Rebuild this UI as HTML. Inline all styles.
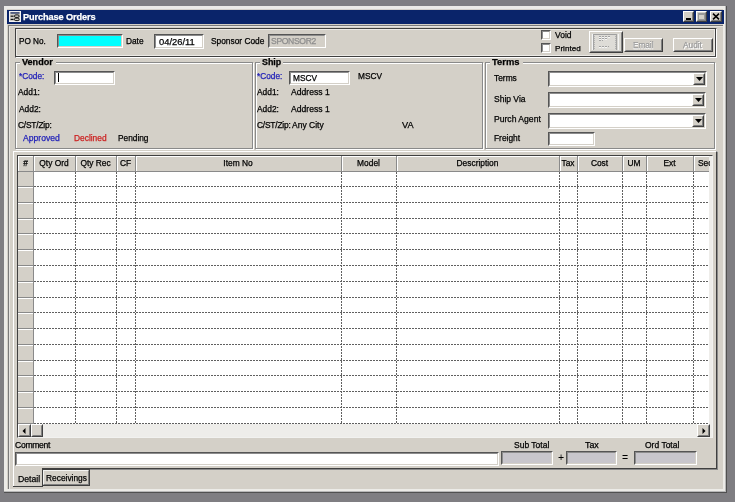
<!DOCTYPE html>
<html><head><meta charset="utf-8"><title>Purchase Orders</title>
<style>
html,body{margin:0;padding:0;width:735px;height:502px;overflow:hidden;background:#7F7E82;}
.a{position:absolute;}
.t{position:absolute;white-space:nowrap;font-family:"Liberation Sans",sans-serif;color:#000;-webkit-text-stroke:0.25px currentColor;will-change:transform;}
.c{text-align:center;}
</style></head><body>
<div id="w" style="position:absolute;left:0;top:0;width:735px;height:502px;overflow:hidden;">
<div class="a" style="left:0px;top:0px;width:735px;height:502px;background:#7F7E82;"></div>
<div class="a" style="left:4px;top:6px;width:723px;height:487px;background:#ECEBE7;"></div>
<div class="a" style="left:726px;top:6px;width:1px;height:487px;background:#505050;"></div>
<div class="a" style="left:4px;top:492px;width:723px;height:1px;background:#505050;"></div>
<div class="a" style="left:725px;top:6px;width:1px;height:486px;background:#B8B8B8;"></div>
<div class="a" style="left:4px;top:491px;width:722px;height:1px;background:#B8B8B8;"></div>
<div class="a" style="left:7px;top:9px;width:716px;height:480px;background:#D4D0C8;"></div>
<div class="a" style="left:7px;top:10px;width:717px;height:14px;background:#0A246A;"></div>
<div class="a" style="left:8px;top:25px;width:1px;height:464px;background:#7A7A7A;"></div>
<div class="a" style="left:8px;top:25px;width:715px;height:1px;background:#7A7A7A;"></div>
<div class="a" style="left:9px;top:26px;width:1px;height:463px;background:#E6E4E0;"></div>
<div class="a" style="left:9px;top:26px;width:714px;height:1px;background:#E6E4E0;"></div>
<svg class="a" style="left:9px;top:11px" width="12" height="11" viewBox="0 0 12 11">
<rect x="0.5" y="0.5" width="11" height="10" fill="#D0CEC8" stroke="#F2F2F2" stroke-width="1"/>
<rect x="1.5" y="1.3" width="9" height="1.3" fill="#1A2A60"/>
<rect x="1.6" y="4.6" width="3" height="1.2" fill="#111"/>
<rect x="1.6" y="7.8" width="3" height="1.2" fill="#111"/>
<rect x="5.5" y="3.9" width="4.6" height="2.5" rx="1.2" fill="none" stroke="#111" stroke-width="1"/>
<rect x="5.5" y="7.1" width="4.6" height="2.5" rx="1.2" fill="none" stroke="#111" stroke-width="1"/>
</svg>
<div class="t" style="left:22.5px;top:13px;font-size:9.2px;line-height:9.2px;color:#fff;font-weight:bold;letter-spacing:-0.1px;">Purchase Orders</div>
<div class="a" style="left:683px;top:11px;width:11px;height:11px;background:#D4D0C8;"></div>
<div class="a" style="left:683px;top:11px;width:11px;height:11px;box-sizing:border-box;border-style:solid;border-width:1px;border-color:#FFFFFF #404040 #404040 #FFFFFF;"></div>
<div class="a" style="left:684px;top:12px;width:9px;height:9px;box-sizing:border-box;border-style:solid;border-width:1px;border-color:#D4D0C8 #808080 #808080 #D4D0C8;"></div>
<div class="a" style="left:696px;top:11px;width:11px;height:11px;background:#D4D0C8;"></div>
<div class="a" style="left:696px;top:11px;width:11px;height:11px;box-sizing:border-box;border-style:solid;border-width:1px;border-color:#FFFFFF #404040 #404040 #FFFFFF;"></div>
<div class="a" style="left:697px;top:12px;width:9px;height:9px;box-sizing:border-box;border-style:solid;border-width:1px;border-color:#D4D0C8 #808080 #808080 #D4D0C8;"></div>
<div class="a" style="left:710px;top:11px;width:12px;height:11px;background:#D4D0C8;"></div>
<div class="a" style="left:710px;top:11px;width:12px;height:11px;box-sizing:border-box;border-style:solid;border-width:1px;border-color:#FFFFFF #404040 #404040 #FFFFFF;"></div>
<div class="a" style="left:711px;top:12px;width:10px;height:9px;box-sizing:border-box;border-style:solid;border-width:1px;border-color:#D4D0C8 #808080 #808080 #D4D0C8;"></div>
<div class="a" style="left:686px;top:18px;width:5px;height:2px;background:#000;"></div>
<div class="a" style="left:698px;top:13px;width:7px;height:7px;box-sizing:border-box;border:1px solid #9a9a9a;border-top-width:2px;"></div>
<svg class="a" style="left:712px;top:13px" width="8" height="7" viewBox="0 0 8 7">
<path d="M1 0.6 L7 6.4 M7 0.6 L1 6.4" stroke="#000" stroke-width="1.5"/></svg>
<div class="a" style="left:15px;top:28px;width:702px;height:30px;box-sizing:border-box;border-style:solid;border-width:1px;border-color:#404040 #FFFFFF #FFFFFF #404040;"></div>
<div class="a" style="left:15px;top:28px;width:701px;height:29px;box-sizing:border-box;border-style:solid;border-width:1px;border-color:#404040 #404040 #404040 #404040;"></div>
<div class="a" style="left:16px;top:29px;width:699px;height:27px;box-sizing:border-box;border-style:solid;border-width:1px;border-color:#ECEAE6 #ECEAE6 #ECEAE6 #ECEAE6;"></div>
<div class="t" style="left:19.3px;top:38px;font-size:8.2px;line-height:8.2px;">PO No.</div>
<div class="a" style="left:57px;top:34px;width:66px;height:14px;background:#00FFFF;"></div>
<div class="a" style="left:57px;top:34px;width:66px;height:14px;box-sizing:border-box;border-style:solid;border-width:1px;border-color:#555555 #FFFFFF #FFFFFF #555555;"></div>
<div class="a" style="left:58px;top:35px;width:64px;height:12px;box-sizing:border-box;border-style:solid;border-width:1px;border-color:#8C8C8C #D4D0C8 #D4D0C8 #8C8C8C;"></div>
<div class="t" style="left:126px;top:37px;font-size:8.3px;line-height:8.3px;">Date</div>
<div class="a" style="left:154px;top:34px;width:50px;height:15px;background:#fff;"></div>
<div class="a" style="left:154px;top:34px;width:50px;height:15px;box-sizing:border-box;border-style:solid;border-width:1px;border-color:#555555 #FFFFFF #FFFFFF #555555;"></div>
<div class="a" style="left:155px;top:35px;width:48px;height:13px;box-sizing:border-box;border-style:solid;border-width:1px;border-color:#8C8C8C #D4D0C8 #D4D0C8 #8C8C8C;"></div>
<div class="t" style="left:158.8px;top:37px;font-size:9.4px;line-height:9.4px;">04/26/11</div>
<div class="t" style="left:210.5px;top:37px;font-size:8.35px;line-height:8.35px;">Sponsor Code</div>
<div class="a" style="left:268px;top:34px;width:58px;height:14px;background:#D4D0C8;"></div>
<div class="a" style="left:268px;top:34px;width:58px;height:14px;box-sizing:border-box;border-style:solid;border-width:1px;border-color:#555555 #FFFFFF #FFFFFF #555555;"></div>
<div class="a" style="left:269px;top:35px;width:56px;height:12px;box-sizing:border-box;border-style:solid;border-width:1px;border-color:#8C8C8C #D4D0C8 #D4D0C8 #8C8C8C;"></div>
<div class="t" style="left:271.4px;top:37px;font-size:8.6px;line-height:8.6px;color:#8c8c8c;letter-spacing:-0.35px;">SPONSOR2</div>
<div class="a" style="left:541px;top:30px;width:10px;height:10px;background:#fff;"></div>
<div class="a" style="left:541px;top:30px;width:10px;height:10px;box-sizing:border-box;border-style:solid;border-width:1px;border-color:#555555 #FFFFFF #FFFFFF #555555;"></div>
<div class="a" style="left:542px;top:31px;width:8px;height:8px;box-sizing:border-box;border-style:solid;border-width:1px;border-color:#8C8C8C #D4D0C8 #D4D0C8 #8C8C8C;"></div>
<div class="t" style="left:554.7px;top:31px;font-size:8.5px;line-height:8.5px;">Void</div>
<div class="a" style="left:541px;top:43px;width:10px;height:10px;background:#fff;"></div>
<div class="a" style="left:541px;top:43px;width:10px;height:10px;box-sizing:border-box;border-style:solid;border-width:1px;border-color:#555555 #FFFFFF #FFFFFF #555555;"></div>
<div class="a" style="left:542px;top:44px;width:8px;height:8px;box-sizing:border-box;border-style:solid;border-width:1px;border-color:#8C8C8C #D4D0C8 #D4D0C8 #8C8C8C;"></div>
<div class="t" style="left:554.7px;top:45px;font-size:8.1px;line-height:8.1px;">Printed</div>
<div class="a" style="left:589px;top:31px;width:34px;height:22px;background:#D4D0C8;"></div>
<div class="a" style="left:589px;top:31px;width:34px;height:22px;box-sizing:border-box;border-style:solid;border-width:1px;border-color:#FFFFFF #404040 #404040 #FFFFFF;"></div>
<div class="a" style="left:590px;top:32px;width:32px;height:20px;box-sizing:border-box;border-style:solid;border-width:1px;border-color:#D4D0C8 #808080 #808080 #D4D0C8;"></div>
<svg class="a" style="left:591px;top:33px" width="30" height="18" viewBox="0 0 30 18" shape-rendering="crispEdges">
<rect x="0" y="0" width="30" height="18" fill="#DAD8D2"/>
<path d="M2.5 1 V17" stroke="#A4A4A4" stroke-width="1"/>
<path d="M25.5 1 V17" stroke="#A4A4A4" stroke-width="1"/>
<path d="M1.5 1 V17 M27.5 1 V17" stroke="#F4F4F4" stroke-width="1"/>
<path d="M3 1.5 H25" stroke="#A0A0A0" stroke-width="1"/>
<path d="M3.5 3 V16 M24.5 3 V16" stroke="#B4B4B4" stroke-width="1" stroke-dasharray="1 1"/>
<rect x="4" y="2" width="20" height="14" fill="#DEDCD7"/>
<path d="M8 3.5 H20 M8 5.5 H17 M8 7.5 H12 M8 13.5 H18" stroke="#A2A2A2" stroke-width="1" stroke-dasharray="2 1"/>
<path d="M8 4.5 H19 M8 6.5 H16 M8 14.5 H17" stroke="#F6F6F6" stroke-width="1" stroke-dasharray="2 1"/>
</svg>
<div class="a" style="left:624px;top:38px;width:39px;height:14px;background:#D4D0C8;"></div>
<div class="a" style="left:624px;top:38px;width:39px;height:14px;box-sizing:border-box;border-style:solid;border-width:1px;border-color:#FFFFFF #404040 #404040 #FFFFFF;"></div>
<div class="a" style="left:625px;top:39px;width:37px;height:12px;box-sizing:border-box;border-style:solid;border-width:1px;border-color:#D4D0C8 #808080 #808080 #D4D0C8;"></div>
<div class="t" style="left:633.4px;top:43px;font-size:8.2px;line-height:8.2px;color:#ffffff;">Email</div>
<div class="t" style="left:632.6px;top:42px;font-size:8.2px;line-height:8.2px;color:#9c9c9c;">Email</div>
<div class="a" style="left:673px;top:38px;width:40px;height:14px;background:#D4D0C8;"></div>
<div class="a" style="left:673px;top:38px;width:40px;height:14px;box-sizing:border-box;border-style:solid;border-width:1px;border-color:#FFFFFF #404040 #404040 #FFFFFF;"></div>
<div class="a" style="left:674px;top:39px;width:38px;height:12px;box-sizing:border-box;border-style:solid;border-width:1px;border-color:#D4D0C8 #808080 #808080 #D4D0C8;"></div>
<div class="t" style="left:683.6px;top:42px;font-size:8.3px;line-height:8.3px;color:#ffffff;">Audit</div>
<div class="t" style="left:682.8px;top:41px;font-size:8.3px;line-height:8.3px;color:#9c9c9c;">Audit</div>
<div class="a" style="left:16px;top:63px;width:238px;height:87px;box-sizing:border-box;border-style:solid;border-width:1px;border-color:#FFFFFF #FFFFFF #FFFFFF #FFFFFF;"></div>
<div class="a" style="left:15px;top:62px;width:238px;height:87px;box-sizing:border-box;border-style:solid;border-width:1px;border-color:#8a8a8a #8a8a8a #8a8a8a #8a8a8a;"></div>
<div class="a" style="left:20.2px;top:58px;width:36.1px;height:9px;background:#D4D0C8;"></div>
<div class="t" style="left:22.2px;top:58px;font-size:9.1px;line-height:9.1px;font-weight:bold;">Vendor</div>
<div class="a" style="left:256px;top:63px;width:228px;height:87px;box-sizing:border-box;border-style:solid;border-width:1px;border-color:#FFFFFF #FFFFFF #FFFFFF #FFFFFF;"></div>
<div class="a" style="left:255px;top:62px;width:228px;height:87px;box-sizing:border-box;border-style:solid;border-width:1px;border-color:#8a8a8a #8a8a8a #8a8a8a #8a8a8a;"></div>
<div class="a" style="left:259.5px;top:58px;width:23.5px;height:9px;background:#D4D0C8;"></div>
<div class="t" style="left:261.5px;top:58px;font-size:8.9px;line-height:8.9px;font-weight:bold;">Ship</div>
<div class="a" style="left:486px;top:63px;width:230px;height:87px;box-sizing:border-box;border-style:solid;border-width:1px;border-color:#FFFFFF #FFFFFF #FFFFFF #FFFFFF;"></div>
<div class="a" style="left:485px;top:62px;width:230px;height:87px;box-sizing:border-box;border-style:solid;border-width:1px;border-color:#8a8a8a #8a8a8a #8a8a8a #8a8a8a;"></div>
<div class="a" style="left:490.3px;top:58px;width:33.2px;height:9px;background:#D4D0C8;"></div>
<div class="t" style="left:492.3px;top:57px;font-size:9.4px;line-height:9.4px;font-weight:bold;">Terms</div>
<div class="t" style="left:18.5px;top:72px;font-size:8.3px;line-height:8.3px;color:#1F1FB8;">*Code:</div>
<div class="a" style="left:54px;top:71px;width:61px;height:14px;background:#fff;"></div>
<div class="a" style="left:54px;top:71px;width:61px;height:14px;box-sizing:border-box;border-style:solid;border-width:1px;border-color:#555555 #FFFFFF #FFFFFF #555555;"></div>
<div class="a" style="left:55px;top:72px;width:59px;height:12px;box-sizing:border-box;border-style:solid;border-width:1px;border-color:#8C8C8C #D4D0C8 #D4D0C8 #8C8C8C;"></div>
<div class="a" style="left:58px;top:73px;width:1px;height:9px;background:#000;"></div>
<div class="t" style="left:18.2px;top:88px;font-size:8.4px;line-height:8.4px;">Add1:</div>
<div class="t" style="left:18.8px;top:105px;font-size:8.4px;line-height:8.4px;">Add2:</div>
<div class="t" style="left:18.2px;top:121px;font-size:8.4px;line-height:8.4px;letter-spacing:-0.2px;">C/ST/Zip:</div>
<div class="t" style="left:22.7px;top:134px;font-size:8.6px;line-height:8.6px;color:#1F1FB8;">Approved</div>
<div class="t" style="left:73.7px;top:134px;font-size:8.4px;line-height:8.4px;color:#CC2020;">Declined</div>
<div class="t" style="left:117.6px;top:134px;font-size:8.3px;line-height:8.3px;">Pending</div>
<div class="t" style="left:256.7px;top:72px;font-size:8.3px;line-height:8.3px;color:#1F1FB8;">*Code:</div>
<div class="a" style="left:289px;top:71px;width:61px;height:14px;background:#fff;"></div>
<div class="a" style="left:289px;top:71px;width:61px;height:14px;box-sizing:border-box;border-style:solid;border-width:1px;border-color:#555555 #FFFFFF #FFFFFF #555555;"></div>
<div class="a" style="left:290px;top:72px;width:59px;height:12px;box-sizing:border-box;border-style:solid;border-width:1px;border-color:#8C8C8C #D4D0C8 #D4D0C8 #8C8C8C;"></div>
<div class="t" style="left:292.7px;top:74px;font-size:8.3px;line-height:8.3px;">MSCV</div>
<div class="t" style="left:358px;top:72px;font-size:8.3px;line-height:8.3px;">MSCV</div>
<div class="t" style="left:256.7px;top:88px;font-size:8.4px;line-height:8.4px;">Add1:</div>
<div class="t" style="left:291.4px;top:88px;font-size:8.6px;line-height:8.6px;">Address 1</div>
<div class="t" style="left:256.7px;top:105px;font-size:8.4px;line-height:8.4px;">Add2:</div>
<div class="t" style="left:291.4px;top:105px;font-size:8.6px;line-height:8.6px;">Address 1</div>
<div class="t" style="left:256.7px;top:121px;font-size:8.4px;line-height:8.4px;letter-spacing:-0.2px;">C/ST/Zip:</div>
<div class="t" style="left:292.0px;top:121px;font-size:8.5px;line-height:8.5px;">Any City</div>
<div class="t" style="left:402.0px;top:121px;font-size:9.2px;line-height:9.2px;">VA</div>
<div class="t" style="left:494.2px;top:74px;font-size:8.4px;line-height:8.4px;">Terms</div>
<div class="t" style="left:494.2px;top:95px;font-size:8.5px;line-height:8.5px;">Ship Via</div>
<div class="t" style="left:494.2px;top:115px;font-size:8.6px;line-height:8.6px;">Purch Agent</div>
<div class="t" style="left:494.2px;top:134px;font-size:8.4px;line-height:8.4px;">Freight</div>
<div class="a" style="left:548px;top:71px;width:159px;height:16px;background:#fff;"></div>
<div class="a" style="left:548px;top:71px;width:159px;height:16px;box-sizing:border-box;border-style:solid;border-width:1px;border-color:#555555 #FFFFFF #FFFFFF #555555;"></div>
<div class="a" style="left:549px;top:72px;width:157px;height:14px;box-sizing:border-box;border-style:solid;border-width:1px;border-color:#8C8C8C #D4D0C8 #D4D0C8 #8C8C8C;"></div>
<div class="a" style="left:693px;top:73px;width:12px;height:12px;background:#D4D0C8;"></div>
<div class="a" style="left:693px;top:73px;width:12px;height:12px;box-sizing:border-box;border-style:solid;border-width:1px;border-color:#FFFFFF #404040 #404040 #FFFFFF;"></div>
<div class="a" style="left:694px;top:74px;width:10px;height:10px;box-sizing:border-box;border-style:solid;border-width:1px;border-color:#D4D0C8 #808080 #808080 #D4D0C8;"></div>
<svg class="a" style="left:695.5px;top:77.0px" width="7" height="4" viewBox="0 0 7 4"><path d="M0 0 H7 L3.5 4 Z" fill="#000"/></svg>
<div class="a" style="left:548px;top:92px;width:158px;height:16px;background:#fff;"></div>
<div class="a" style="left:548px;top:92px;width:158px;height:16px;box-sizing:border-box;border-style:solid;border-width:1px;border-color:#555555 #FFFFFF #FFFFFF #555555;"></div>
<div class="a" style="left:549px;top:93px;width:156px;height:14px;box-sizing:border-box;border-style:solid;border-width:1px;border-color:#8C8C8C #D4D0C8 #D4D0C8 #8C8C8C;"></div>
<div class="a" style="left:692px;top:94px;width:12px;height:12px;background:#D4D0C8;"></div>
<div class="a" style="left:692px;top:94px;width:12px;height:12px;box-sizing:border-box;border-style:solid;border-width:1px;border-color:#FFFFFF #404040 #404040 #FFFFFF;"></div>
<div class="a" style="left:693px;top:95px;width:10px;height:10px;box-sizing:border-box;border-style:solid;border-width:1px;border-color:#D4D0C8 #808080 #808080 #D4D0C8;"></div>
<svg class="a" style="left:694.5px;top:98.0px" width="7" height="4" viewBox="0 0 7 4"><path d="M0 0 H7 L3.5 4 Z" fill="#000"/></svg>
<div class="a" style="left:548px;top:113px;width:158px;height:16px;background:#fff;"></div>
<div class="a" style="left:548px;top:113px;width:158px;height:16px;box-sizing:border-box;border-style:solid;border-width:1px;border-color:#555555 #FFFFFF #FFFFFF #555555;"></div>
<div class="a" style="left:549px;top:114px;width:156px;height:14px;box-sizing:border-box;border-style:solid;border-width:1px;border-color:#8C8C8C #D4D0C8 #D4D0C8 #8C8C8C;"></div>
<div class="a" style="left:692px;top:115px;width:12px;height:12px;background:#D4D0C8;"></div>
<div class="a" style="left:692px;top:115px;width:12px;height:12px;box-sizing:border-box;border-style:solid;border-width:1px;border-color:#FFFFFF #404040 #404040 #FFFFFF;"></div>
<div class="a" style="left:693px;top:116px;width:10px;height:10px;box-sizing:border-box;border-style:solid;border-width:1px;border-color:#D4D0C8 #808080 #808080 #D4D0C8;"></div>
<svg class="a" style="left:694.5px;top:119.0px" width="7" height="4" viewBox="0 0 7 4"><path d="M0 0 H7 L3.5 4 Z" fill="#000"/></svg>
<div class="a" style="left:548px;top:132px;width:47px;height:14px;background:#fff;"></div>
<div class="a" style="left:548px;top:132px;width:47px;height:14px;box-sizing:border-box;border-style:solid;border-width:1px;border-color:#555555 #FFFFFF #FFFFFF #555555;"></div>
<div class="a" style="left:549px;top:133px;width:45px;height:12px;box-sizing:border-box;border-style:solid;border-width:1px;border-color:#8C8C8C #D4D0C8 #D4D0C8 #8C8C8C;"></div>
<div class="a" style="left:13px;top:151px;width:705px;height:319px;box-sizing:border-box;border-style:solid;border-width:1px;border-color:#FFFFFF #8a8a8a #8a8a8a #FFFFFF;"></div>
<div class="a" style="left:13px;top:151px;width:704px;height:318px;box-sizing:border-box;border-style:solid;border-width:1px;border-color:#FFFFFF #404040 #404040 #FFFFFF;"></div>
<div class="a" style="left:17px;top:155px;width:696px;height:283px;background:#D4D0C8;"></div>
<div class="a" style="left:17px;top:155px;width:696px;height:283px;box-sizing:border-box;border-style:solid;border-width:1px;border-color:#404040 #F2F2F0 #F2F2F0 #404040;"></div>
<div class="a" style="left:18px;top:156px;width:691px;height:268px;background:#fff;"></div>
<div class="a" style="left:709px;top:156px;width:3px;height:281px;background:#EEEDEA;"></div>
<div class="a" style="left:18px;top:156px;width:691px;height:16px;background:#D4D0C8;"></div>
<div class="a" style="left:18px;top:156px;width:691px;height:1px;background:#FFFFFF;"></div>
<div class="a" style="left:18px;top:171px;width:691px;height:1px;background:#8a8a8a;"></div>
<div class="a" style="left:18px;top:172px;width:15px;height:252px;background:#D4D0C8;"></div>
<div class="a" style="left:18px;top:156px;width:1px;height:15px;background:#FFFFFF;"></div>
<svg class="a" style="left:0px;top:0px" width="735" height="502" viewBox="0 0 735 502" shape-rendering="crispEdges">
<path d="M34 186.5 H709" stroke="#606060" stroke-width="1" stroke-dasharray="2 1"/>
<path d="M18 186.5 H34" stroke="#8a8a8a" stroke-width="1"/>
<path d="M18 187.5 H33" stroke="#ffffff" stroke-width="1"/>
<path d="M34 202.5 H709" stroke="#606060" stroke-width="1" stroke-dasharray="2 1"/>
<path d="M18 202.5 H34" stroke="#8a8a8a" stroke-width="1"/>
<path d="M18 203.5 H33" stroke="#ffffff" stroke-width="1"/>
<path d="M34 218.5 H709" stroke="#606060" stroke-width="1" stroke-dasharray="2 1"/>
<path d="M18 218.5 H34" stroke="#8a8a8a" stroke-width="1"/>
<path d="M18 219.5 H33" stroke="#ffffff" stroke-width="1"/>
<path d="M34 233.5 H709" stroke="#606060" stroke-width="1" stroke-dasharray="2 1"/>
<path d="M18 233.5 H34" stroke="#8a8a8a" stroke-width="1"/>
<path d="M18 234.5 H33" stroke="#ffffff" stroke-width="1"/>
<path d="M34 249.5 H709" stroke="#606060" stroke-width="1" stroke-dasharray="2 1"/>
<path d="M18 249.5 H34" stroke="#8a8a8a" stroke-width="1"/>
<path d="M18 250.5 H33" stroke="#ffffff" stroke-width="1"/>
<path d="M34 265.5 H709" stroke="#606060" stroke-width="1" stroke-dasharray="2 1"/>
<path d="M18 265.5 H34" stroke="#8a8a8a" stroke-width="1"/>
<path d="M18 266.5 H33" stroke="#ffffff" stroke-width="1"/>
<path d="M34 281.5 H709" stroke="#606060" stroke-width="1" stroke-dasharray="2 1"/>
<path d="M18 281.5 H34" stroke="#8a8a8a" stroke-width="1"/>
<path d="M18 282.5 H33" stroke="#ffffff" stroke-width="1"/>
<path d="M34 297.5 H709" stroke="#606060" stroke-width="1" stroke-dasharray="2 1"/>
<path d="M18 297.5 H34" stroke="#8a8a8a" stroke-width="1"/>
<path d="M18 298.5 H33" stroke="#ffffff" stroke-width="1"/>
<path d="M34 312.5 H709" stroke="#606060" stroke-width="1" stroke-dasharray="2 1"/>
<path d="M18 312.5 H34" stroke="#8a8a8a" stroke-width="1"/>
<path d="M18 313.5 H33" stroke="#ffffff" stroke-width="1"/>
<path d="M34 328.5 H709" stroke="#606060" stroke-width="1" stroke-dasharray="2 1"/>
<path d="M18 328.5 H34" stroke="#8a8a8a" stroke-width="1"/>
<path d="M18 329.5 H33" stroke="#ffffff" stroke-width="1"/>
<path d="M34 344.5 H709" stroke="#606060" stroke-width="1" stroke-dasharray="2 1"/>
<path d="M18 344.5 H34" stroke="#8a8a8a" stroke-width="1"/>
<path d="M18 345.5 H33" stroke="#ffffff" stroke-width="1"/>
<path d="M34 360.5 H709" stroke="#606060" stroke-width="1" stroke-dasharray="2 1"/>
<path d="M18 360.5 H34" stroke="#8a8a8a" stroke-width="1"/>
<path d="M18 361.5 H33" stroke="#ffffff" stroke-width="1"/>
<path d="M34 375.5 H709" stroke="#606060" stroke-width="1" stroke-dasharray="2 1"/>
<path d="M18 375.5 H34" stroke="#8a8a8a" stroke-width="1"/>
<path d="M18 376.5 H33" stroke="#ffffff" stroke-width="1"/>
<path d="M34 391.5 H709" stroke="#606060" stroke-width="1" stroke-dasharray="2 1"/>
<path d="M18 391.5 H34" stroke="#8a8a8a" stroke-width="1"/>
<path d="M18 392.5 H33" stroke="#ffffff" stroke-width="1"/>
<path d="M34 407.5 H709" stroke="#606060" stroke-width="1" stroke-dasharray="2 1"/>
<path d="M18 407.5 H34" stroke="#8a8a8a" stroke-width="1"/>
<path d="M18 408.5 H33" stroke="#ffffff" stroke-width="1"/>
<path d="M34 423.5 H709" stroke="#606060" stroke-width="1" stroke-dasharray="2 1"/>
<path d="M18 423.5 H34" stroke="#8a8a8a" stroke-width="1"/>
<path d="M33.5 172 V424" stroke="#606060" stroke-width="1" stroke-dasharray="2 1"/>
<path d="M33.5 156 V171" stroke="#8a8a8a" stroke-width="1"/>
<path d="M34.5 157 V171" stroke="#ffffff" stroke-width="1"/>
<path d="M75.5 172 V424" stroke="#606060" stroke-width="1" stroke-dasharray="2 1"/>
<path d="M75.5 156 V171" stroke="#8a8a8a" stroke-width="1"/>
<path d="M76.5 157 V171" stroke="#ffffff" stroke-width="1"/>
<path d="M116.5 172 V424" stroke="#606060" stroke-width="1" stroke-dasharray="2 1"/>
<path d="M116.5 156 V171" stroke="#8a8a8a" stroke-width="1"/>
<path d="M117.5 157 V171" stroke="#ffffff" stroke-width="1"/>
<path d="M135.5 172 V424" stroke="#606060" stroke-width="1" stroke-dasharray="2 1"/>
<path d="M135.5 156 V171" stroke="#8a8a8a" stroke-width="1"/>
<path d="M136.5 157 V171" stroke="#ffffff" stroke-width="1"/>
<path d="M341.5 172 V424" stroke="#606060" stroke-width="1" stroke-dasharray="2 1"/>
<path d="M341.5 156 V171" stroke="#8a8a8a" stroke-width="1"/>
<path d="M342.5 157 V171" stroke="#ffffff" stroke-width="1"/>
<path d="M396.5 172 V424" stroke="#606060" stroke-width="1" stroke-dasharray="2 1"/>
<path d="M396.5 156 V171" stroke="#8a8a8a" stroke-width="1"/>
<path d="M397.5 157 V171" stroke="#ffffff" stroke-width="1"/>
<path d="M559.5 172 V424" stroke="#606060" stroke-width="1" stroke-dasharray="2 1"/>
<path d="M559.5 156 V171" stroke="#8a8a8a" stroke-width="1"/>
<path d="M560.5 157 V171" stroke="#ffffff" stroke-width="1"/>
<path d="M577.5 172 V424" stroke="#606060" stroke-width="1" stroke-dasharray="2 1"/>
<path d="M577.5 156 V171" stroke="#8a8a8a" stroke-width="1"/>
<path d="M578.5 157 V171" stroke="#ffffff" stroke-width="1"/>
<path d="M622.5 172 V424" stroke="#606060" stroke-width="1" stroke-dasharray="2 1"/>
<path d="M622.5 156 V171" stroke="#8a8a8a" stroke-width="1"/>
<path d="M623.5 157 V171" stroke="#ffffff" stroke-width="1"/>
<path d="M646.5 172 V424" stroke="#606060" stroke-width="1" stroke-dasharray="2 1"/>
<path d="M646.5 156 V171" stroke="#8a8a8a" stroke-width="1"/>
<path d="M647.5 157 V171" stroke="#ffffff" stroke-width="1"/>
<path d="M693.5 172 V424" stroke="#606060" stroke-width="1" stroke-dasharray="2 1"/>
<path d="M693.5 156 V171" stroke="#8a8a8a" stroke-width="1"/>
<path d="M694.5 157 V171" stroke="#ffffff" stroke-width="1"/>
<path d="M33.5 171 V424" stroke="#8a8a8a" stroke-width="1"/>
<path d="M18 171.5 H709" stroke="#8a8a8a" stroke-width="1"/>
</svg>
<div class="t c" style="left:18px;width:15px;top:159px;font-size:8.4px;line-height:8.4px">#</div>
<div class="t c" style="left:33px;width:42px;top:159px;font-size:8.4px;line-height:8.4px">Qty Ord</div>
<div class="t c" style="left:75px;width:41px;top:159px;font-size:8.4px;line-height:8.4px">Qty Rec</div>
<div class="t c" style="left:116px;width:19px;top:159px;font-size:8.4px;line-height:8.4px">CF</div>
<div class="t c" style="left:135px;width:206px;top:159px;font-size:8.4px;line-height:8.4px">Item No</div>
<div class="t c" style="left:341px;width:55px;top:159px;font-size:8.4px;line-height:8.4px">Model</div>
<div class="t c" style="left:396px;width:163px;top:159px;font-size:8.4px;line-height:8.4px">Description</div>
<div class="t c" style="left:559px;width:18px;top:159px;font-size:8.4px;line-height:8.4px">Tax</div>
<div class="t c" style="left:577px;width:45px;top:159px;font-size:8.4px;line-height:8.4px">Cost</div>
<div class="t c" style="left:622px;width:24px;top:159px;font-size:8.4px;line-height:8.4px">UM</div>
<div class="t c" style="left:646px;width:47px;top:159px;font-size:8.4px;line-height:8.4px">Ext</div>
<div class="t" style="left:697.6px;top:159px;font-size:8.4px;line-height:8.4px;width:12.4px;overflow:hidden;white-space:nowrap">Sec</div>
<div class="a" style="left:18px;top:424px;width:691px;height:13px;background:#EEEDEA;"></div>
<div class="a" style="left:18px;top:424px;width:13px;height:13px;background:#D4D0C8;"></div>
<div class="a" style="left:18px;top:424px;width:13px;height:13px;box-sizing:border-box;border-style:solid;border-width:1px;border-color:#FFFFFF #404040 #404040 #FFFFFF;"></div>
<div class="a" style="left:19px;top:425px;width:11px;height:11px;box-sizing:border-box;border-style:solid;border-width:1px;border-color:#D4D0C8 #808080 #808080 #D4D0C8;"></div>
<div class="a" style="left:31px;top:424px;width:12px;height:13px;background:#D4D0C8;"></div>
<div class="a" style="left:31px;top:424px;width:12px;height:13px;box-sizing:border-box;border-style:solid;border-width:1px;border-color:#FFFFFF #404040 #404040 #FFFFFF;"></div>
<div class="a" style="left:32px;top:425px;width:10px;height:11px;box-sizing:border-box;border-style:solid;border-width:1px;border-color:#D4D0C8 #808080 #808080 #D4D0C8;"></div>
<div class="a" style="left:697px;top:424px;width:13px;height:13px;background:#D4D0C8;"></div>
<div class="a" style="left:697px;top:424px;width:13px;height:13px;box-sizing:border-box;border-style:solid;border-width:1px;border-color:#FFFFFF #404040 #404040 #FFFFFF;"></div>
<div class="a" style="left:698px;top:425px;width:11px;height:11px;box-sizing:border-box;border-style:solid;border-width:1px;border-color:#D4D0C8 #808080 #808080 #D4D0C8;"></div>
<svg class="a" style="left:22px;top:428px" width="4" height="6" viewBox="0 0 4 6"><path d="M3.5 0 V6 L0.5 3 Z" fill="#000"/></svg>
<svg class="a" style="left:702px;top:428px" width="4" height="6" viewBox="0 0 4 6"><path d="M0.5 0 V6 L3.5 3 Z" fill="#000"/></svg>
<div class="t" style="left:15px;top:441px;font-size:8.6px;line-height:8.6px;letter-spacing:-0.3px;">Comment</div>
<div class="a" style="left:15px;top:452px;width:484px;height:14px;background:#fff;"></div>
<div class="a" style="left:15px;top:452px;width:484px;height:14px;box-sizing:border-box;border-style:solid;border-width:1px;border-color:#555555 #FFFFFF #FFFFFF #555555;"></div>
<div class="a" style="left:16px;top:453px;width:482px;height:12px;box-sizing:border-box;border-style:solid;border-width:1px;border-color:#8C8C8C #D4D0C8 #D4D0C8 #8C8C8C;"></div>
<div class="t" style="left:513.5px;top:441px;font-size:8.5px;line-height:8.5px;">Sub Total</div>
<div class="a" style="left:501px;top:451px;width:52px;height:14px;background:#C8C6CC;"></div>
<div class="a" style="left:501px;top:451px;width:52px;height:14px;box-sizing:border-box;border-style:solid;border-width:1px;border-color:#555555 #FFFFFF #FFFFFF #555555;"></div>
<div class="a" style="left:502px;top:452px;width:50px;height:12px;box-sizing:border-box;border-style:solid;border-width:1px;border-color:#8C8C8C #D4D0C8 #D4D0C8 #8C8C8C;"></div>
<div class="t" style="left:557.8px;top:452px;font-size:10.5px;line-height:10.5px;-webkit-text-stroke:0;">+</div>
<div class="t" style="left:585.2px;top:441px;font-size:8.9px;line-height:8.9px;">Tax</div>
<div class="a" style="left:566px;top:451px;width:51px;height:14px;background:#C8C6CC;"></div>
<div class="a" style="left:566px;top:451px;width:51px;height:14px;box-sizing:border-box;border-style:solid;border-width:1px;border-color:#555555 #FFFFFF #FFFFFF #555555;"></div>
<div class="a" style="left:567px;top:452px;width:49px;height:12px;box-sizing:border-box;border-style:solid;border-width:1px;border-color:#8C8C8C #D4D0C8 #D4D0C8 #8C8C8C;"></div>
<div class="t" style="left:621.8px;top:452px;font-size:10.5px;line-height:10.5px;-webkit-text-stroke:0;">=</div>
<div class="t" style="left:644.7px;top:441px;font-size:8.5px;line-height:8.5px;">Ord Total</div>
<div class="a" style="left:634px;top:451px;width:63px;height:14px;background:#C8C6CC;"></div>
<div class="a" style="left:634px;top:451px;width:63px;height:14px;box-sizing:border-box;border-style:solid;border-width:1px;border-color:#555555 #FFFFFF #FFFFFF #555555;"></div>
<div class="a" style="left:635px;top:452px;width:61px;height:12px;box-sizing:border-box;border-style:solid;border-width:1px;border-color:#8C8C8C #D4D0C8 #D4D0C8 #8C8C8C;"></div>
<div class="a" style="left:42px;top:469px;width:48px;height:16px;background:#D4D0C8;"></div>
<div class="a" style="left:42px;top:469px;width:48px;height:17px;box-sizing:border-box;border-style:solid;border-width:1px;border-color:#404040 #404040 #404040 #404040;"></div>
<div class="a" style="left:43px;top:470px;width:46px;height:15px;box-sizing:border-box;border-style:solid;border-width:1px;border-color:#F4F4F2 #808080 #808080 #F4F4F2;"></div>
<div class="t" style="left:45.6px;top:474px;font-size:8.4px;line-height:8.4px;">Receivings</div>
<div class="a" style="left:13px;top:468px;width:29px;height:18px;background:#D4D0C8;"></div>
<div class="a" style="left:13px;top:468px;width:1px;height:18px;background:#FFFFFF;"></div>
<div class="a" style="left:13px;top:486px;width:30px;height:1px;background:#404040;"></div>
<div class="a" style="left:42px;top:469px;width:1px;height:18px;background:#404040;"></div>
<div class="t" style="left:17.7px;top:475px;font-size:8.7px;line-height:8.7px;">Detail</div>
</div>
</body></html>
